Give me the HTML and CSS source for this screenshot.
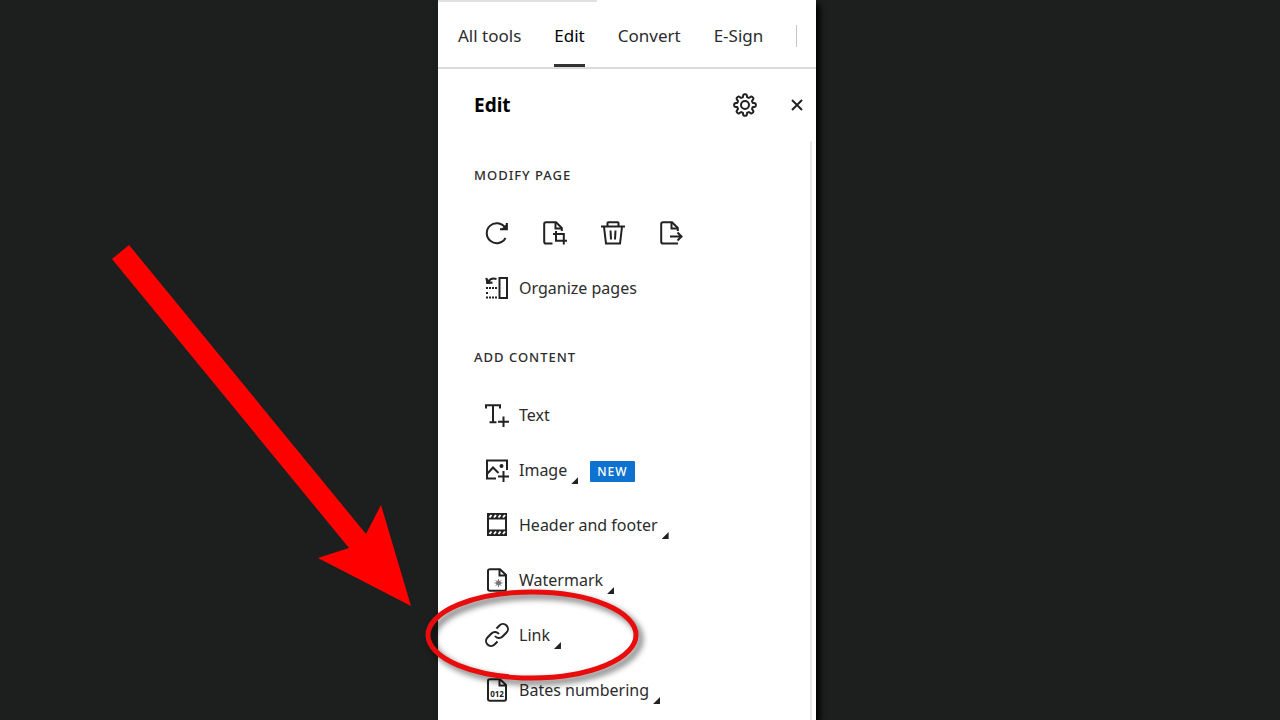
FILE: index.html
```html
<!DOCTYPE html>
<html lang="en">
<head>
  <meta charset="UTF-8">
  <meta name="viewport" content="width=device-width, initial-scale=1.0">
  <title>Edit</title>
  <link rel="stylesheet" href="styles.css">
</head>
<body>
  <main class="stage">
    <div class="panel">
      <div class="progress"></div>

      <nav class="tabs">
        <a href="#all">All tools</a>
        <a href="#edit" class="active">Edit</a>
        <a href="#convert">Convert</a>
        <a href="#sign">E-Sign</a>
        <span class="divider"></span>
      </nav>

      <header class="panel-header">
        <h1>Edit</h1>
        <button class="icon-btn" aria-label="Settings">
          <svg viewBox="0 0 24 24"><path d="M9.800 4.300L10.300 2Q10.500 1.200 11.300 1.200H12.700Q13.500 1.200 13.700 2L14.200 4.300L15.900 5L17.900 3.700Q18.600 3.300 19.200 3.900L20.100 4.800Q20.700 5.400 20.300 6.100L19 8.100L19.700 9.800L22 10.300Q22.800 10.500 22.800 11.300V12.700Q22.800 13.500 22 13.700L19.700 14.200L19 15.900L20.300 17.900Q20.700 18.600 20.100 19.200L19.200 20.100Q18.600 20.700 17.900 20.300L15.900 19L14.200 19.700L13.700 22Q13.500 22.800 12.700 22.800H11.300Q10.500 22.800 10.300 22L9.800 19.700L8.100 19L6.100 20.300Q5.400 20.700 4.800 20.100L3.900 19.200Q3.300 18.600 3.700 17.900L5 15.900L4.300 14.200L2 13.700Q1.200 13.500 1.200 12.700V11.300Q1.200 10.500 2 10.300L4.300 9.800L5 8.100L3.700 6.100Q3.300 5.400 3.900 4.800L4.800 3.900Q5.400 3.300 6.100 3.700L8.100 5Z"/><circle cx="12" cy="12" r="4"/></svg>
        </button>
        <button class="icon-btn close" aria-label="Close">
          <svg viewBox="0 0 12 12"><path d="M1 1L11 11M11 1L1 11"/></svg>
        </button>
      </header>

      <div class="content">
        <section>
          <h2>MODIFY PAGE</h2>
          <div class="page-actions">
            <button class="icon-btn" aria-label="Rotate">
              <svg viewBox="0 0 24 24"><path d="M20.500 17A10 10 0 1 1 20 6.500"/><path d="M21.800 2V8.200H15"/><path class="fill" d="M21.500 4.500V8H18Z"/></svg>
            </button>
            <button class="icon-btn" aria-label="Crop pages">
              <svg viewBox="0 0 24 24"><path d="M9.500 22.500H3Q1.200 22.500 1.200 20.700V3Q1.200 1.200 3 1.200H13L18.800 7V10"/><path d="M12.500 1.500V7.500H18.500"/><path d="M13 10V19.800H24M10 13H20.800V23.500"/></svg>
            </button>
            <button class="icon-btn" aria-label="Delete pages">
              <svg viewBox="0 0 24 24"><path d="M0 5.500H24M6.500 5V2Q6.500 1.300 7.200 1.300H16.800Q17.500 1.300 17.500 2V5M3 6L5 22.500H19L21 6M9.500 9.500L10 18.500M14.500 9.500L14 18.500"/></svg>
            </button>
            <button class="icon-btn" aria-label="Extract pages">
              <svg viewBox="0 0 24 24"><path d="M19 22.500H4Q2.200 22.500 2.200 20.700V3Q2.200 1.200 4 1.200H13L18.800 7V10"/><path d="M12.500 1.500V7.500H18.500"/><path d="M11 15.500H22M18.500 11.500L22.500 15.500L18.500 19.500"/></svg>
            </button>
          </div>
          <ul class="tools">
            <li><button class="tool">
              <svg viewBox="0 0 24 24"><path d="M14.500 2H22V22H14.500Z"/><path d="M3 6Q6 1 11.500 3M1.500 2L2.300 7L7.500 6.500"/><path class="fill" d="M2 4L2.500 6.800L5 6.500Z"/><path d="M1 12H12M1 21.500H12M1 17H3" stroke-dasharray="2 1"/></svg>
              <span>Organize pages</span>
            </button></li>
          </ul>
        </section>

        <section>
          <h2>ADD CONTENT</h2>
          <ul class="tools">
            <li><button class="tool">
              <svg viewBox="0 0 24 24"><path d="M1 5.500V2.300H15V5.500M8 2.300V19M4.500 19.200H11.500M18.500 13.500V24M13 18.700H24"/></svg>
              <span>Text</span>
            </button></li>
            <li><button class="tool">
              <svg viewBox="0 0 24 24"><path d="M11 20.500H2V2.500H22V12M2 16L8 9.500L13.500 15M18.500 13V24M13 18.500H24"/><circle class="fill" cx="16.500" cy="8" r="1"/></svg>
              <span>Image</span><i class="more"></i><b class="badge">NEW</b>
            </button></li>
            <li><button class="tool">
              <svg viewBox="0 0 24 24"><path class="fill" d="M3 1H21V5.500H3ZM3 17.500H21V22H3Z"/><path d="M3 1V22M21 1V22"/><path class="holes" d="M4.500 4.500L6.500 2M9 4.500L11 2M13.500 4.500L15.500 2M18 4.500L20 2M4.500 21L6.500 18.500M9 21L11 18.500M13.500 21L15.500 18.500M18 21L20 18.500"/></svg>
              <span>Header and footer</span><i class="more"></i>
            </button></li>
            <li><button class="tool">
              <svg viewBox="0 0 24 24"><path d="M5 1.200H15L21 7V21Q21 22.800 19.200 22.800H5Q3 22.800 3 21V3Q3 1.200 5 1.200ZM14.500 1.500V7.500H20.500"/><circle class="grey" cx="13.500" cy="15" r="2"/><path class="grey" d="M13.500 11V19M9.500 15H17.500M10.700 12.200L16.300 17.800M16.300 12.200L10.700 17.800"/></svg>
              <span>Watermark</span><i class="more"></i>
            </button></li>
            <li class="marked">
              <button class="tool">
                <svg viewBox="0 0 24 24"><path d="M10 13a5 5 0 0 0 7.540.540l4-4a5 5 0 0 0-7.070-7.070l-3 3"/><path d="M14 11a5 5 0 0 0-7.540-.540l-4 4a5 5 0 0 0 7.070 7.070l3-3"/></svg>
                <span>Link</span><i class="more"></i>
              </button>
              <svg class="ring" viewBox="0 0 214 92"><ellipse cx="107" cy="46" rx="104" ry="43"/></svg>
              <svg class="arrow" viewBox="0 0 300 362"><path d="M0 14L17 0L254 289L269 260L299 361L206 313L237 303Z"/></svg>
            </li>
            <li><button class="tool">
              <svg viewBox="0 0 24 24"><path d="M5 1.200H15L21 7V21Q21 22.800 19.200 22.800H5Q3 22.800 3 21V3Q3 1.200 5 1.200ZM14.500 1.500V7.500H20.500"/><text x="12" y="18.500" text-anchor="middle">012</text></svg>
              <span>Bates numbering</span><i class="more"></i>
            </button></li>
          </ul>
        </section>
      </div>
    </div>
  </main>
</body>
</html>
```
FILE: styles.css
```css
:root {
  --bg: #1d1f1e;
  --ink: #2c2c2c;
  --line: #dadada;
  --red: #ff0000;
}
* {
  box-sizing: border-box;
}
body {
  margin: 0;
  background: var(--bg);
  color: var(--ink);
  font-family: "Noto Sans", "Open Sans", sans-serif;
  font-size: 16px;
}
.stage {
  display: flex;
  justify-content: center;
  height: 100vh;
  padding-right: 26px;
  overflow: hidden;
}
.panel {
  position: relative;
  display: flex;
  flex-direction: column;
  width: 100%;
  max-width: 378px;
  background: #fff;
  box-shadow: 4px 4px 6px #000;
}
.progress {
  position: absolute;
  top: 0;
  left: 0;
  width: 42%;
  height: 2px;
  background: #e1e1e1;
}
.tabs {
  display: flex;
  flex: none;
  align-items: center;
  gap: 33px;
  height: 69px;
  padding-left: 20px;
  border-bottom: 2px solid var(--line);
  font-size: 17px;
}
.tabs a {
  display: flex;
  align-items: center;
  height: 67px;
  padding-top: 7px;
  border-bottom: 3px solid transparent;
  color: var(--ink);
  text-decoration: none;
  white-space: nowrap;
}
.tabs a.active {
  color: #000;
  border-bottom-color: #333;
}
.divider {
  flex: none;
  width: 1px;
  height: 22px;
  margin-top: 4px;
  background: #c4c4c4;
}
.panel-header {
  display: flex;
  flex: none;
  align-items: center;
  height: 72px;
  padding: 0 13px 0 36px;
}
h1 {
  flex: 1;
  margin: 0;
  color: #000;
  font-size: 19px;
  line-height: 24px;
}
button {
  padding: 0;
  border: 0;
  background: none;
  color: inherit;
  font: inherit;
  cursor: pointer;
}
svg {
  display: block;
  fill: none;
  stroke: #222;
  stroke-width: 2;
  overflow: visible;
}
svg .fill {
  fill: #222;
}
svg .grey {
  fill: #777;
  stroke: #777;
  stroke-width: 1;
}
svg .holes {
  stroke: #fff;
}
svg text {
  fill: #222;
  stroke: none;
  font-size: 8px;
  font-weight: bold;
}
.icon-btn,
.icon-btn svg {
  width: 24px;
  height: 24px;
}
.close,
.close svg {
  width: 12px;
  height: 12px;
}
.close {
  margin-left: 34px;
}
.content {
  flex: 1;
  margin-right: 4px;
  padding-top: 4px;
  border-right: 2px solid #e8e8e8;
}
section + section {
  margin-top: 12px;
}
h2 {
  margin: 0;
  padding-left: 36px;
  font-size: 13px;
  font-weight: 500;
  line-height: 60px;
  letter-spacing: 1px;
}
.page-actions {
  display: flex;
  align-items: center;
  gap: 34px;
  height: 55px;
  padding-left: 47px;
}
.tools {
  margin: 0;
  padding: 0 0 0 47px;
  list-style: none;
}
.tool {
  display: flex;
  align-items: center;
  height: 55px;
}
.tool svg {
  width: 24px;
  height: 24px;
  margin-right: 10px;
}
.more {
  align-self: flex-end;
  width: 7px;
  height: 7px;
  margin: 0 0 13px 4px;
  background: #222;
  clip-path: polygon(100% 0, 100% 100%, 0 100%);
}
.badge {
  margin: 4px 0 0 12px;
  padding: 0 7px;
  border-radius: 1px;
  background: #0d72d0;
  color: #fff;
  font-size: 12px;
  font-weight: 500;
  line-height: 21px;
  letter-spacing: 1px;
}

/* callout drawn over the Link row */
.marked {
  position: relative;
}
.ring,
.arrow {
  position: absolute;
  z-index: 1;
  pointer-events: none;
}
.ring {
  top: -18px;
  left: -60px;
  width: 214px;
  height: 92px;
  stroke: #e80c0c;
  stroke-width: 5;
  filter: drop-shadow(4px 4px 3px rgba(0, 0, 0, 0.6));
}
.arrow {
  bottom: 55px;
  left: -373px;
  width: 300px;
  height: 362px;
  fill: var(--red);
  stroke: none;
}
```
